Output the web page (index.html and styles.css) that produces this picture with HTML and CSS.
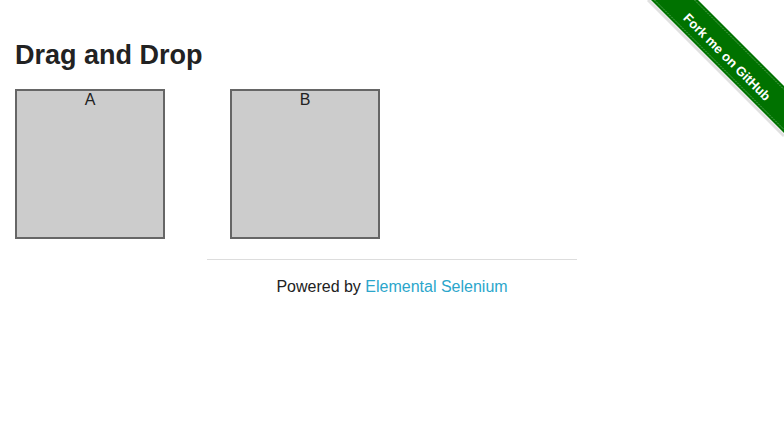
FILE: index.html
```
<!DOCTYPE html>
<html>
<head>
<meta charset="utf-8">
<link rel="stylesheet" href="styles.css">
<title>The Internet</title>
</head>
<body>
<a class="ribbon" href="#">
  <svg width="149" height="149" viewBox="0 0 149 149">
    <line x1="13" y1="0" x2="149" y2="136" stroke="rgba(0,0,0,0.12)" stroke-width="3"/>
    <polygon points="16,0 63,0 149,86 149,133" fill="#007200"/>
    <line x1="19.5" y1="0" x2="149" y2="129.5" stroke="rgba(255,255,255,0.35)" stroke-width="1" stroke-dasharray="2 1"/>
    <line x1="59.5" y1="0" x2="149" y2="89.5" stroke="rgba(255,255,255,0.35)" stroke-width="1" stroke-dasharray="2 1"/>
    <text x="92" y="57" transform="rotate(45 92 57)" text-anchor="middle" dominant-baseline="central" class="ribbon-text">Fork me on GitHub</text>
  </svg>
</a>
<div class="content">
  <h3 class="title">Drag and Drop</h3>
  <div class="columns">
    <div class="column"><header class="label">A</header></div>
    <div class="column"><header class="label">B</header></div>
  </div>
</div>
<footer class="footer">
  <hr class="rule">
  <div class="powered">Powered by <a class="link" href="#">Elemental Selenium</a></div>
</footer>
</body>
</html>
```
FILE: styles.css
```
html, body {
  margin: 0;
  padding: 0;
  background: #fff;
}
body {
  font-family: "Liberation Sans", Arial, sans-serif;
  color: #222;
  font-size: 16px;
}
.ribbon {
  position: absolute;
  top: 0;
  right: 0;
  display: block;
  width: 149px;
  height: 149px;
}
.ribbon svg {
  display: block;
}
.ribbon-text {
  fill: #fff;
  font-family: "Liberation Sans", Arial, sans-serif;
  font-weight: bold;
  font-size: 13px;
}
.content {
  padding: 36px 15px 0;
}
.title {
  margin: 0 0 15px;
  font-size: 27px;
  line-height: 38px;
  font-weight: bold;
  color: #222;
}
.columns {
  display: flex;
  gap: 65px;
}
.column {
  box-sizing: border-box;
  width: 150px;
  height: 150px;
  border: 2px solid #666;
  background: #ccc;
  text-align: center;
}
.label {
  font-size: 16px;
  line-height: 18px;
  color: #222;
}
.footer {
  width: 370px;
  margin: 20px auto 0;
}
.rule {
  margin: 0 0 18px;
  border: 0;
  border-top: 1px solid #ddd;
  height: 0;
}
.powered {
  text-align: center;
  font-size: 16px;
  line-height: 18px;
}
.link {
  color: #2ba6cb;
  text-decoration: none;
}
```
